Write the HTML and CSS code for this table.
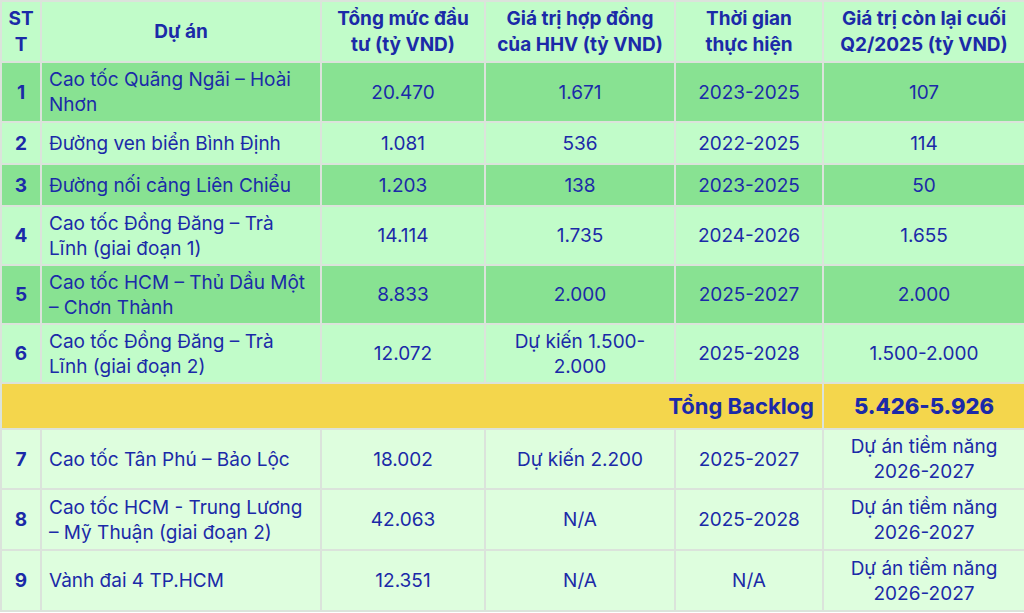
FILE: index.html
```html
<!DOCTYPE html>
<html lang="vi">
<head>
<meta charset="utf-8">
<link rel="stylesheet" href="styles.css">
</head>
<body>
<table class="backlog">
  <colgroup>
    <col class="c-stt">
    <col class="c-name">
    <col class="c-total">
    <col class="c-contract">
    <col class="c-time">
    <col class="c-remain">
  </colgroup>
  <thead>
    <tr class="head">
      <th>ST<br>T</th>
      <th>Dự án</th>
      <th>Tổng mức đầu<br>tư (tỷ VND)</th>
      <th>Giá trị hợp đồng<br>của HHV (tỷ VND)</th>
      <th>Thời gian<br>thực hiện</th>
      <th>Giá trị còn lại cuối<br>Q2/2025 (tỷ VND)</th>
    </tr>
  </thead>
  <tbody>
    <tr class="odd h60">
      <td class="stt">1</td><td class="name">Cao tốc Quãng Ngãi – Hoài<br>Nhơn</td><td>20.470</td><td>1.671</td><td>2023-2025</td><td>107</td>
    </tr>
    <tr class="even h42">
      <td class="stt">2</td><td class="name">Đường ven biển Bình Định</td><td>1.081</td><td>536</td><td>2022-2025</td><td>114</td>
    </tr>
    <tr class="odd h42">
      <td class="stt">3</td><td class="name">Đường nối cảng Liên Chiểu</td><td>1.203</td><td>138</td><td>2023-2025</td><td>50</td>
    </tr>
    <tr class="even h59">
      <td class="stt">4</td><td class="name">Cao tốc Đồng Đăng – Trà<br>Lĩnh (giai đoạn 1)</td><td>14.114</td><td>1.735</td><td>2024-2026</td><td>1.655</td>
    </tr>
    <tr class="odd h59">
      <td class="stt">5</td><td class="name">Cao tốc HCM – Thủ Dầu Một<br>– Chơn Thành</td><td>8.833</td><td>2.000</td><td>2025-2027</td><td>2.000</td>
    </tr>
    <tr class="even h59">
      <td class="stt">6</td><td class="name">Cao tốc Đồng Đăng – Trà<br>Lĩnh (giai đoạn 2)</td><td>12.072</td><td>Dự kiến 1.500-<br>2.000</td><td>2025-2028</td><td>1.500-2.000</td>
    </tr>
    <tr class="sum">
      <td colspan="5" class="sum-label">Tổng Backlog</td><td class="sum-value">5.426-5.926</td>
    </tr>
    <tr class="future h60">
      <td class="stt">7</td><td class="name">Cao tốc Tân Phú – Bảo Lộc</td><td>18.002</td><td>Dự kiến 2.200</td><td>2025-2027</td><td>Dự án tiềm năng<br>2026-2027</td>
    </tr>
    <tr class="future h61">
      <td class="stt">8</td><td class="name">Cao tốc HCM - Trung Lương<br>– Mỹ Thuận (giai đoạn 2)</td><td>42.063</td><td>N/A</td><td>2025-2028</td><td>Dự án tiềm năng<br>2026-2027</td>
    </tr>
    <tr class="future h61">
      <td class="stt">9</td><td class="name">Vành đai 4 TP.HCM</td><td>12.351</td><td>N/A</td><td>N/A</td><td>Dự án tiềm năng<br>2026-2027</td>
    </tr>
  </tbody>
</table>
</body>
</html>
```
FILE: styles.css
```css
html, body {
  margin: 0;
  padding: 0;
  background: #ffffff;
}

.backlog {
  width: 1024px;
  border-collapse: collapse;
  table-layout: fixed;
  font-family: "Inter", "Noto Sans", sans-serif;
  font-size: 19px;
  line-height: 25px;
  color: #1b2aa8;
}

.c-stt { width: 40px; }
.c-name { width: 280px; }
.c-total { width: 164px; }
.c-contract { width: 190px; }
.c-time { width: 148px; }
.c-remain { width: 202px; }

.backlog th,
.backlog td {
  border: 2px solid #dbe3db;
  padding: 0 4px;
  text-align: center;
  vertical-align: middle;
  white-space: nowrap;
}

.backlog th {
  font-weight: 700;
  line-height: 26px;
}

.backlog .stt {
  padding: 0;
  font-weight: 700;
}

.backlog .name {
  text-align: left;
  padding-left: 7px;
  padding-right: 2px;
}

.head { height: 61px; background: #c1fcc9; }
.head th:first-child { padding: 0; }

.odd { background: #88e292; }
.even { background: #c1fcc9; }
.future { background: #defede; }

.h42 { height: 42px; }
.h59 { height: 59px; }
.h60 { height: 60px; }
.h61 { height: 61px; }

.sum { height: 46px; background: #f4d64c; }
.backlog .sum-label {
  text-align: right;
  font-weight: 700;
  font-size: 22px;
  padding-right: 8px;
}
.sum-value {
  font-weight: 800;
  font-size: 22px;
}
```
